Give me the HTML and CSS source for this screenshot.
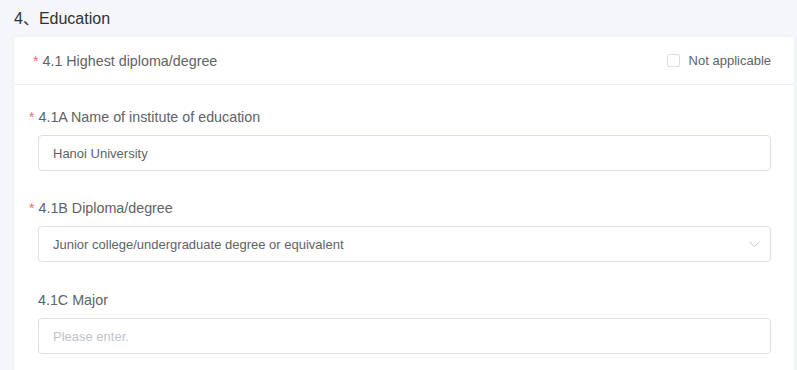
FILE: index.html
```html
<!DOCTYPE html>
<html lang="en">
<head>
<meta charset="utf-8">
<title>Education</title>
<link rel="stylesheet" href="styles.css">
</head>
<body>
<div class="page">
  <div class="section-title">4、Education</div>
  <div class="card">
    <div class="card-header">
      <div class="header-label"><span class="req">*</span>4.1 Highest diploma/degree</div>
      <label class="check"><span class="box"></span><span class="check-text">Not applicable</span></label>
    </div>
    <div class="card-body">
      <div class="field">
        <div class="label"><span class="req hang">*</span>4.1A Name of institute of education</div>
        <div class="input"><span class="value">Hanoi University</span></div>
      </div>
      <div class="field">
        <div class="label"><span class="req hang">*</span>4.1B Diploma/degree</div>
        <div class="input select"><span class="value">Junior college/undergraduate degree or equivalent</span>
          <svg class="chev" width="11" height="7" viewBox="0 0 11 7"><path d="M0.5 0.8 L5.5 5.8 L10.5 0.8" fill="none" stroke="#c0c4cc" stroke-width="1"/></svg>
        </div>
      </div>
      <div class="field field-last">
        <div class="label">4.1C Major</div>
        <div class="input"><span class="placeholder">Please enter.</span></div>
      </div>
    </div>
  </div>
</div>
</body>
</html>
```
FILE: styles.css
```css
html, body {
  margin: 0;
  padding: 0;
}
body {
  background: #f5f6f9;
  font-family: "Liberation Sans", Arial, "Noto Sans CJK SC", sans-serif;
  color: #606266;
}
.page {
  padding: 0 3px 0 14px;
}
.section-title {
  height: 37px;
  box-sizing: border-box;
  padding-bottom: 3px;
  display: flex;
  align-items: center;
  font-size: 16px;
  color: #303133;
}
.card {
  width: 780px;
  background: #fff;
  border-radius: 4px;
  box-shadow: 0 0 3px rgba(0, 0, 0, 0.06);
  min-height: 340px;
}
.card-header {
  height: 48px;
  box-sizing: border-box;
  border-bottom: 1px solid #ebeef5;
  display: flex;
  align-items: center;
  justify-content: space-between;
  padding: 0 23px 0 19px;
}
.header-label {
  font-size: 14.3px;
  color: #606266;
}
.req {
  color: #f56c6c;
  font-size: 14px;
  margin-right: 4px;
}
.req.hang {
  margin-left: -9px;
}
.check {
  display: flex;
  align-items: center;
  font-size: 13px;
  color: #606266;
}
.box {
  width: 13px;
  height: 13px;
  box-sizing: border-box;
  border: 1px solid #dcdfe6;
  border-radius: 2px;
  margin-right: 9px;
  background: #fff;
}
.card-body {
  padding: 22px 23px 0 24px;
}
.field {
  margin-bottom: 27px;
}
.field-last {
  padding-top: 1px;
}
.label {
  font-size: 14.3px;
  line-height: 20px;
  margin-bottom: 8px;
  color: #606266;
}
.input {
  height: 36px;
  box-sizing: border-box;
  border: 1px solid #dcdfe6;
  border-radius: 4px;
  display: flex;
  align-items: center;
  padding: 0 14px;
  font-size: 13px;
  color: #606266;
  background: #fff;
}
.select {
  justify-content: space-between;
  padding-right: 10px;
}
.chev {
  display: block;
}
.placeholder {
  color: #c0c4cc;
}
```
